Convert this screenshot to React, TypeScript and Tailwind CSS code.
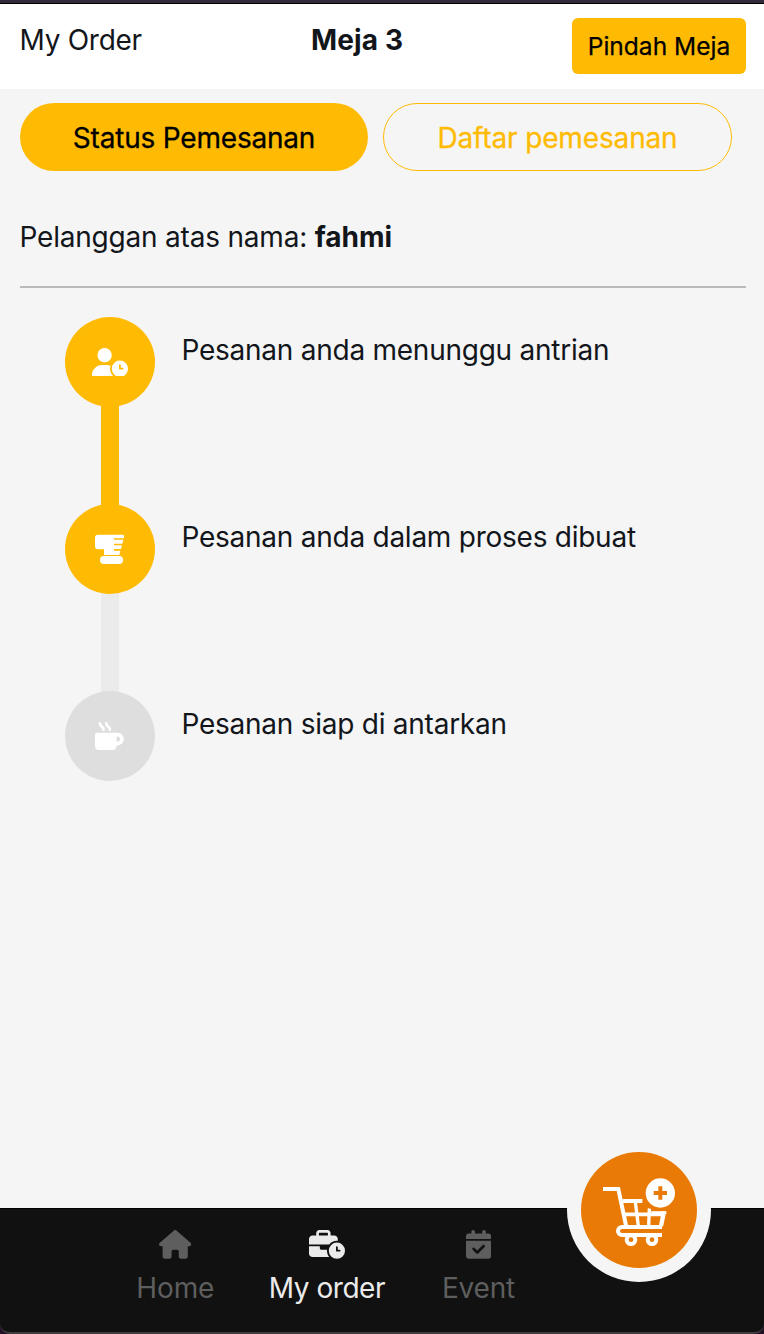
import type { ReactNode } from "react";
import { FaBusinessTime, FaCalendarCheck, FaHouse, FaMugHot, FaUserClock } from "react-icons/fa6";

function BlenderIcon() {
  return (
    <svg width="29" height="30" viewBox="0 0 87 90" fill="currentColor" aria-hidden="true">
      <path d="M9 2H82Q88 2 87 9L86 13H57V17H85L82 29H57V34H81L78 45H57V50H76L73 63H27V46H9Q0 46 0 37V11Q0 2 9 2Z" />
      <rect x="15" y="66" width="69" height="24" rx="11" />
    </svg>
  );
}

function CartPlusIcon() {
  return (
    <svg width="84" height="80" viewBox="0 0 252 240" fill="none" stroke="white" strokeWidth="12" aria-hidden="true">
      <path d="M15 51H61L85 165" />
      <path d="M74 87H133" />
      <path d="M80 127H200" strokeWidth="11" />
      <path d="M112 90L121 162M154 110L152 162" strokeWidth="10" />
      <path d="M198 118L189 162" strokeWidth="13" />
      <path d="M150 107L164 121H150Z" fill="white" stroke="none" />
      <path d="M192 165H72A12 12 0 0 0 72 189H192" />
      <circle cx="99" cy="203" r="13" fill="#e87a05" />
      <circle cx="162" cy="203" r="13" fill="#e87a05" />
      <circle cx="187" cy="63" r="49" fill="#e87a05" stroke="none" />
      <circle cx="187" cy="63" r="44" fill="white" stroke="none" />
      <path d="M167 63H207M187 43V83" stroke="#e87a05" />
      <path d="M162 122H205" strokeWidth="9" />
    </svg>
  );
}

type StepProps = {
  icon: ReactNode;
  label: string;
  active?: boolean;
  connector?: "done" | "pending";
};

function Step({ icon, label, active, connector }: StepProps) {
  return (
    <li className="flex gap-[26.5px]">
      <div className="flex w-[90px] flex-col items-center">
        <div
          className={`relative z-10 flex size-[90px] items-center justify-center rounded-full pr-px text-white ${
            active ? "bg-[#ffbb03]" : "bg-[#dedede]"
          }`}
        >
          {icon}
        </div>
        {connector && (
          <div className={`-my-1 h-[105px] w-[18px] ${connector === "done" ? "bg-[#ffbb03]" : "bg-[#ebebeb]"}`} />
        )}
      </div>
      <p className="mt-[13px] h-10 whitespace-nowrap leading-10 tracking-[-0.25px]">{label}</p>
    </li>
  );
}

function NavItem({ icon, label, active }: { icon: ReactNode; label: ReactNode; active?: boolean }) {
  return (
    <a
      className={`flex w-[151.6px] flex-col items-center pt-[21px] ${active ? "text-[#ebebeb]" : "text-[#5e5e5e]"}`}
    >
      {icon}
      <span className="mt-[9px] leading-10">{label}</span>
    </a>
  );
}

export default function App() {
  return (
    <div className="flex h-[1334px] w-[764px] flex-col overflow-hidden bg-[#f5f5f5] font-['Inter',sans-serif] text-[28px] text-[#12161b]">
      <div className="h-1 shrink-0 border-b border-black bg-[#34293a]" />
      <header className="flex h-[85px] shrink-0 items-start bg-white pl-[19.5px] pr-[18px]">
        <h1 className="mt-4 w-[291.5px] leading-10 tracking-[-0.28px]">My Order</h1>
        <strong className="mt-4 font-bold leading-10 tracking-[0.15px]">Meja 3</strong>
        <button className="ml-auto mt-[14px] h-14 w-[174px] rounded-md bg-[#ffbb03] text-[24.5px] tracking-[0.02px] text-black [-webkit-text-stroke:0.25px]">
          Pindah Meja
        </button>
      </header>

      <main className="flex-1 pl-5 pr-[18px] pt-[14px]">
        <div className="flex gap-[15px]">
          <button className="h-[68px] w-[348px] rounded-full bg-[#ffbb03] pt-0.5 tracking-[-0.2px] text-black [-webkit-text-stroke:0.3px]">
            Status Pemesanan
          </button>
          <button className="h-[68px] w-[349px] rounded-full border border-[#ffbb03] pt-0.5 tracking-[-0.15px] text-[#ffbb03] [-webkit-text-stroke:0.3px]">
            Daftar pemesanan
          </button>
        </div>

        <p className="-ml-[0.5px] mt-[46px] h-10 whitespace-nowrap leading-10 tracking-[-0.2px]">
          Pelanggan atas nama: <strong className="font-bold tracking-normal">fahmi</strong>
        </p>
        <hr className="mt-[29px] border-t-2 border-[#b9bbbb]" />

        <ol className="mt-[29px] pl-[45px]">
          <Step active connector="done" icon={<FaUserClock className="h-[28.8px] w-9" />} label="Pesanan anda menunggu antrian" />
          <Step active connector="pending" icon={<BlenderIcon />} label="Pesanan anda dalam proses dibuat" />
          <Step icon={<FaMugHot className="size-[28.8px]" />} label="Pesanan siap di antarkan" />
        </ol>
      </main>

      <div className="shrink-0 bg-[#241027]">
        <nav className="relative flex h-[126px] rounded-b-[10px] border-b-2 border-t border-b-[#423e40] border-t-black bg-[#111111] pl-[99.5px]">
          <NavItem icon={<FaHouse className="h-[28.8px] w-[32.4px]" />} label={<span className="tracking-[-0.1px]">Home</span>} />
          <NavItem
            active
            icon={<FaBusinessTime className="h-[28.8px] w-9" />}
            label={<span className="tracking-[-0.45px]">My order</span>}
          />
          <NavItem icon={<FaCalendarCheck className="h-[28.8px] w-[25.2px]" />} label={<span className="tracking-[-0.2px]">Event</span>} />
          <button
            aria-label="Keranjang"
            className="absolute -top-[71px] left-[567px] flex size-36 items-center justify-center rounded-full bg-[#f5f5f5]"
          >
            <span className="flex size-[116px] items-start rounded-full bg-[#e87a05] pl-[17px] pt-5">
              <CartPlusIcon />
            </span>
          </button>
        </nav>
      </div>
    </div>
  );
}
